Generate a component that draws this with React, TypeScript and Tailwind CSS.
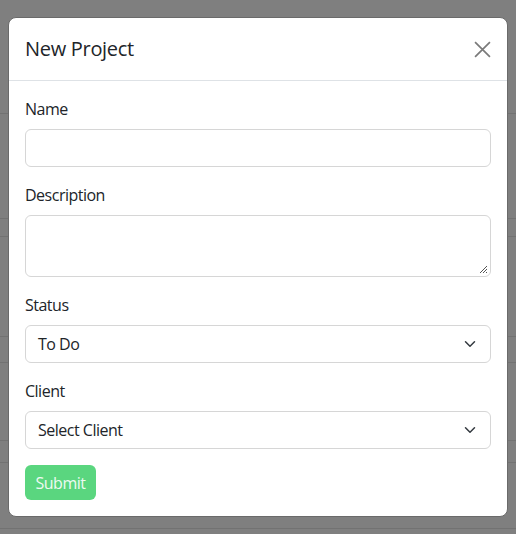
import React from "react";

function Chevron() {
  return (
    <svg width="16" height="12" viewBox="0 0 16 16" className="shrink-0" fill="none">
      <path d="m2 5 6 6 6-6" stroke="#343a40" strokeWidth="2" strokeLinecap="round" strokeLinejoin="round" />
    </svg>
  );
}

function Field({ label, children }: { label: string; children: React.ReactNode }) {
  return (
    <div className="mb-4 flex flex-col">
      <label className="mb-2 text-[16px] leading-6">{label}</label>
      {children}
    </div>
  );
}

function Select({ value }: { value: string }) {
  return (
    <div className="flex h-[38px] items-center justify-between rounded-[6px] border border-[#d6d6d6] bg-white pl-3 pr-3 text-[16px] leading-6">
      <span>{value}</span>
      <Chevron />
    </div>
  );
}

export default function App() {
  const rows = [114, 105, 18, 100, 26, 78, 22, 66];
  return (
    <div
      className="relative h-[534px] w-[516px] overflow-hidden bg-[#7f7f7f] text-[#212529] tracking-[-0.5px]"
      style={{ fontFamily: '"Open Sans", "Noto Sans", sans-serif' }}
    >
      <div className="flex flex-col">
        {rows.map((h, i) => (
          <div key={i} className="border-b border-[#727272]" style={{ height: h }} />
        ))}
      </div>
      <div className="absolute left-[8px] top-[17px] w-[500px] rounded-[8px] border border-[#6a6a6a] bg-white">
        <div className="flex h-[63px] items-center justify-between border-b border-[#dee2e6] px-4">
          <h5 className="text-[20px] font-medium leading-[30px] tracking-[-0.3px]">New Project</h5>
          <svg width="17" height="17" viewBox="0 0 16 16">
            <path d="M1 1 15 15M15 1 1 15" stroke="#7a7a7a" strokeWidth="1.6" />
          </svg>
        </div>
        <div className="flex flex-col p-4">
          <Field label="Name">
            <div className="h-[38px] rounded-[6px] border border-[#d6d6d6]" />
          </Field>
          <Field label="Description">
            <div className="relative h-[62px] rounded-[6px] border border-[#d6d6d6]">
              <svg width="10" height="10" viewBox="0 0 10 10" className="absolute bottom-[2px] right-[2px]">
                <path d="M9 2 2 9M9 5 5 9M9 8 8 9" stroke="#555" strokeWidth="1" />
              </svg>
            </div>
          </Field>
          <Field label="Status">
            <Select value="To Do" />
          </Field>
          <Field label="Client">
            <Select value="Select Client" />
          </Field>
          <div>
            <button className="h-[35px] w-[71px] rounded-[6px] bg-[#5ad67f] text-[16px] leading-6 text-[#eefaf2]">
              Submit
            </button>
          </div>
        </div>
      </div>
    </div>
  );
}
